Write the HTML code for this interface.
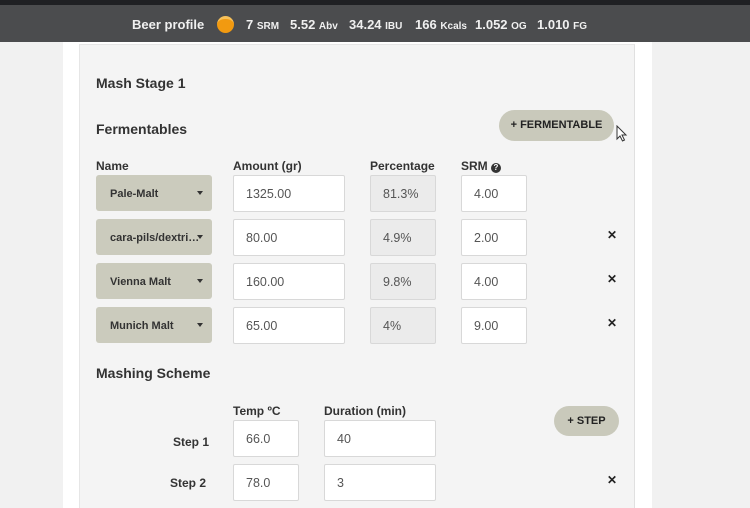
<!DOCTYPE html>
<html><head><style>
*{margin:0;padding:0;box-sizing:border-box}
html{width:750px;height:508px;overflow:hidden}
body{width:750px;height:508px;overflow:hidden;background:#f1f1f1;font-family:"Liberation Sans",Arial,sans-serif;color:#333;position:relative}
.a{position:absolute}
.top{left:0;top:0;width:750px;height:5px;background:#1f2023}
.bar{left:0;top:5px;width:750px;height:37px;background:#4b4c4e;color:#f0f0f0;font-weight:bold;font-size:13px}
.bar span{position:absolute;top:12px;white-space:nowrap}
.bar small{font-size:10px}
.col{left:63px;top:42px;width:589px;height:466px;background:#fff}
.card{left:79px;top:44px;width:556px;height:464px;background:#f4f4f4;border:1px solid #e6e6e6;border-bottom:none;border-right:1px solid #e0e0e0}
h{position:absolute;font-weight:bold;font-size:14px;color:#333}
.lbl{position:absolute;font-weight:bold;font-size:12px;color:#333}
.sel{position:absolute;background:#cbcbbd;border-radius:3px;width:116px;height:36px;font-size:11px;font-weight:bold;color:#333;padding:13px 0 0 14px;white-space:nowrap}
.sel:after{content:"";position:absolute;right:9px;top:16px;border-left:3px solid transparent;border-right:3px solid transparent;border-top:4px solid #333}
.in{position:absolute;background:#fff;border:1px solid #d8d8d8;border-radius:2px;height:37px;font-size:12.5px;color:#555;padding:11px 0 0 12px}
.pc{background:#ebebeb}
.x{position:absolute;font-size:12px;font-weight:bold;color:#222;left:607px}
.btn{position:absolute;background:#c9c9bb;border-radius:16px;font-size:11px;font-weight:bold;color:#222;text-align:center}
</style></head><body>
<div class="a top"></div>
<div class="a bar">
<span style="left:132px">Beer profile</span>
<div style="position:absolute;left:217px;top:11px;width:17px;height:17px;border-radius:50%;background:#f29a10;border-top:3px solid #f7c15a"></div>
<span style="left:246px">7 <small>SRM</small></span>
<span style="left:290px">5.52 <small>Abv</small></span>
<span style="left:349px">34.24 <small>IBU</small></span>
<span style="left:415px">166 <small>Kcals</small></span>
<span style="left:475px">1.052 <small>OG</small></span>
<span style="left:537px">1.010 <small>FG</small></span>
</div>
<div class="a col"></div>
<div class="a card"></div>
<h style="left:96px;top:75px">Mash Stage 1</h>
<h style="left:96px;top:121px">Fermentables</h>
<div class="btn" style="left:499px;top:110px;width:115px;height:31px;line-height:31px">+ FERMENTABLE</div>
<div class="lbl" style="left:96px;top:159px">Name</div>
<div class="lbl" style="left:233px;top:159px">Amount (gr)</div>
<div class="lbl" style="left:370px;top:159px">Percentage</div>
<div class="lbl" style="left:461px;top:159px">SRM <span style="display:inline-block;width:10px;height:10px;border-radius:50%;background:#333;color:#fff;font-size:8px;text-align:center;line-height:10px;vertical-align:0">?</span></div>

<div class="sel" style="left:96px;top:175px">Pale-Malt</div>
<div class="in" style="left:233px;top:175px;width:112px">1325.00</div>
<div class="in pc" style="left:370px;top:175px;width:66px">81.3%</div>
<div class="in" style="left:461px;top:175px;width:66px">4.00</div>

<div class="sel" style="left:96px;top:219px">cara-pils/dextri…</div>
<div class="in" style="left:233px;top:219px;width:112px">80.00</div>
<div class="in pc" style="left:370px;top:219px;width:66px">4.9%</div>
<div class="in" style="left:461px;top:219px;width:66px">2.00</div>
<div class="x" style="top:228px">✕</div>

<div class="sel" style="left:96px;top:263px">Vienna Malt</div>
<div class="in" style="left:233px;top:263px;width:112px">160.00</div>
<div class="in pc" style="left:370px;top:263px;width:66px">9.8%</div>
<div class="in" style="left:461px;top:263px;width:66px">4.00</div>
<div class="x" style="top:272px">✕</div>

<div class="sel" style="left:96px;top:307px">Munich Malt</div>
<div class="in" style="left:233px;top:307px;width:112px">65.00</div>
<div class="in pc" style="left:370px;top:307px;width:66px">4%</div>
<div class="in" style="left:461px;top:307px;width:66px">9.00</div>
<div class="x" style="top:316px">✕</div>

<h style="left:96px;top:365px">Mashing Scheme</h>
<div class="lbl" style="left:233px;top:404px">Temp ºC</div>
<div class="lbl" style="left:324px;top:404px">Duration (min)</div>
<div class="btn" style="left:554px;top:406px;width:65px;height:30px;line-height:30px">+ STEP</div>
<div class="lbl" style="left:173px;top:435px">Step 1</div>
<div class="in" style="left:233px;top:420px;width:66px">66.0</div>
<div class="in" style="left:324px;top:420px;width:112px">40</div>
<div class="lbl" style="left:170px;top:476px">Step 2</div>
<div class="in" style="left:233px;top:464px;width:66px">78.0</div>
<div class="in" style="left:324px;top:464px;width:112px">3</div>
<div class="x" style="top:473px">✕</div>
<svg class="a" style="left:616px;top:125px" width="12" height="18" viewBox="0 0 12 18"><path d="M1 1 L1 14 L4 11 L6.5 16 L8.5 15 L6 10 L10 10 Z" fill="#fff" stroke="#333" stroke-width="1"/></svg>
</body></html>
